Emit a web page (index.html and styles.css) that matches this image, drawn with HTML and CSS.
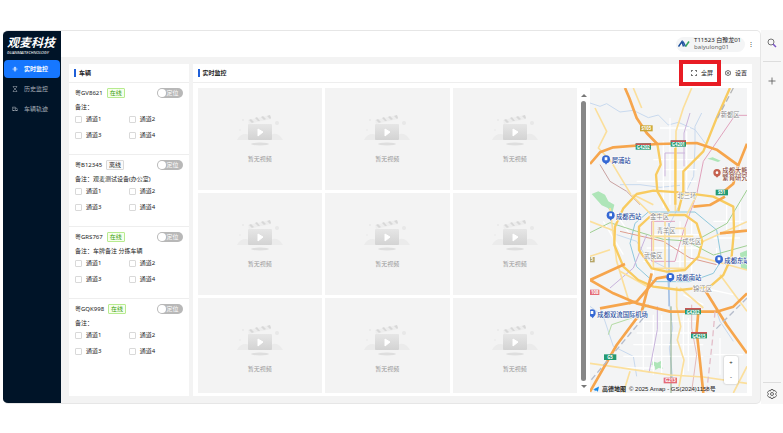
FILE: index.html
```html
<!DOCTYPE html>
<html lang="zh-CN">
<head>
    <meta charset="UTF-8">
    <meta name="viewport" content="width=device-width, initial-scale=1.0">
    <title>实时监控</title>
    <link rel="stylesheet" href="styles.css">
</head>
<body>
    <div class="window">
        <div class="app">
            <aside class="sidebar">
                <div class="logo">观麦科技<small>GUANMAITECHNOLOGY</small></div>
                <nav class="menu">
                    <a href="#" class="menu-item active">
                        <svg class="icon" viewBox="0 0 16 16"><path d="M8 1l4 4H4zM8 15l4-4H4zM1 8l3-3v6zM15 8l-3-3v6z" fill="currentColor" opacity=".8"/><circle cx="8" cy="8" r="2.5" fill="currentColor"/></svg>
                        实时监控
                    </a>
                    <a href="#" class="menu-item">
                        <svg class="icon" viewBox="0 0 16 16"><path d="M2 1h12M2 15h12M4 1v3l4 4 4-4V1M4 15v-3l4-4 4 4v3" fill="none" stroke="currentColor" stroke-width="1.5"/></svg>
                        历史监控
                    </a>
                    <a href="#" class="menu-item">
                        <svg class="icon" viewBox="0 0 16 16"><path d="M1 3h8v9H1zM9 6h4l2 3v3H9M3 6h4" fill="none" stroke="currentColor" stroke-width="1.5"/><circle cx="4" cy="12" r="1.5" fill="currentColor"/><circle cx="12" cy="12" r="1.5" fill="currentColor"/></svg>
                        车辆轨迹
                    </a>
                </nav>
            </aside>

            <div class="main">
                <header class="topbar">
                    <div class="user">
                        <svg class="avatar" viewBox="0 0 24 16"><path d="M1 13L8 3l3 10" fill="none" stroke="#1c4f9c" stroke-width="3"/><path d="M10 3l5 10" fill="none" stroke="#2456a5" stroke-width="3"/><path d="M15 13l7-10" fill="none" stroke="#35a45c" stroke-width="3"/></svg>
                        <div class="user-text">
                            <span>T11523 白豫龙01</span>
                            <span class="account">baiyulong01</span>
                        </div>
                    </div>
                    <button class="more" aria-label="更多">⋮</button>
                </header>

                <div class="content">
                    <section class="panel vehicles">
                        <div class="panel-head"><h2>车辆</h2></div>
                        <div class="vehicle">
                            <div class="vehicle-top">
                                <span>粤GV8621</span><span class="tag online">在线</span>
                                <label class="switch"><input type="checkbox"><span>定位</span></label>
                            </div>
                            <p>备注：</p>
                            <div class="channels">
                                <label><input type="checkbox">通道1</label>
                                <label><input type="checkbox">通道2</label>
                                <label><input type="checkbox">通道3</label>
                                <label><input type="checkbox">通道4</label>
                            </div>
                        </div>
                        <div class="vehicle">
                            <div class="vehicle-top">
                                <span>粤B12345</span><span class="tag">离线</span>
                                <label class="switch"><input type="checkbox"><span>定位</span></label>
                            </div>
                            <p>备注：观麦测试设备(办公室)</p>
                            <div class="channels">
                                <label><input type="checkbox">通道1</label>
                                <label><input type="checkbox">通道2</label>
                                <label><input type="checkbox">通道3</label>
                                <label><input type="checkbox">通道4</label>
                            </div>
                        </div>
                        <div class="vehicle">
                            <div class="vehicle-top">
                                <span>粤GRS767</span><span class="tag online">在线</span>
                                <label class="switch"><input type="checkbox"><span>定位</span></label>
                            </div>
                            <p>备注：车牌备注 分拣车辆</p>
                            <div class="channels">
                                <label><input type="checkbox">通道1</label>
                                <label><input type="checkbox">通道2</label>
                                <label><input type="checkbox">通道3</label>
                                <label><input type="checkbox">通道4</label>
                            </div>
                        </div>
                        <div class="vehicle">
                            <div class="vehicle-top">
                                <span>粤GQK998</span><span class="tag online">在线</span>
                                <label class="switch"><input type="checkbox"><span>定位</span></label>
                            </div>
                            <p>备注：</p>
                            <div class="channels">
                                <label><input type="checkbox">通道1</label>
                                <label><input type="checkbox">通道2</label>
                                <label><input type="checkbox">通道3</label>
                                <label><input type="checkbox">通道4</label>
                            </div>
                        </div>
                    </section>

                    <section class="panel monitor">
                        <div class="panel-head">
                            <h2>实时监控</h2>
                            <div class="actions">
                                <button class="action highlight">
                                    <svg class="icon" viewBox="0 0 16 16"><path d="M1 5V1h4M11 1h4v4M15 11v4h-4M5 15H1v-4" fill="none" stroke="currentColor" stroke-width="2"/></svg>
                                    全屏
                                </button>
                                <button class="action">
                                    <svg class="icon" viewBox="0 0 16 16"><path d="M6 1h4l1 2.500 3 0 1 4.500-1 4.500-3 0-1 2.500H6l-1-2.500-3 0L1 8l1-4.500 3 0z" fill="none" stroke="currentColor" stroke-width="1.500"/><circle cx="8" cy="8" r="2.500" fill="none" stroke="currentColor" stroke-width="1.500"/></svg>
                                    设置
                                </button>
                            </div>
                        </div>
                        <div class="monitor-body">
                            <div class="videos" id="videos"></div>
                            <div class="scrollbar"><i class="up"></i><i class="thumb"></i><i class="down"></i></div>
                            <div class="map">
                                <svg class="map-canvas" viewBox="60 0 471 915" preserveAspectRatio="xMidYMid slice">
                                    <rect x="0" y="-50" width="600" height="1000" fill="#f3f4f5"/>
                                    <!-- parks -->
                                    <g fill="#aee5b8">
                                        <path d="M65 318l20-8 20 10 10 20 18 10-6 25-14-15-18-8z"/>
                                        <path d="M510 495l21-8v60l-18-6z"/>
                                        <path d="M248 820l14 4 12-6-2 14 8 10-14-2-10 6-2-12-10-4z"/>
                                        <path d="M412 212l16-4 24 10-8 4-18-6z"/>
                                    </g>
                                    <!-- rivers -->
                                    <g class="river">
                                        <path d="M60 45l30 10 20-8 40 25 40-5 45 22 30-8 30 30 30-8 50 22 30 40"/>
                                        <path d="M395 75l-20 40 0 60-4 90-30 60-40 80"/>
                                        <path d="M140 440l60 20 30 50 60 30 10 120 8 60-10 60 10 90"/>
                                        <path d="M150 290l60 0 60 8 60-6"/>
                                        <path d="M60 655l40 30 30 90 60 30 10 60M430 640l20 60 40 60"/>
                                    </g>
                                    <!-- streets -->
                                    <g class="street">
                                        <path d="M270 120h90M250 215h140M280 245h100M200 280h180M300 90v260M350 130v200M280 160v200M230 440h160M230 480h160M220 520h160M250 400v160M330 400v160M365 400v160M430 400h90M430 450h80M440 480v60M470 350v90M510 340v90"/>
                                        <path d="M180 700h200M200 735h180M190 770h210M160 805h240M150 840h100M220 680v170M250 680v180M275 680v180M340 680v180M355 690v160M430 800h90M450 750v110M100 400l60 100M140 380l40 60M400 600l90 20M340 620l60 30"/>
                                    </g>
                                    <!-- metro lines -->
                                    <g class="metro">
                                        <path d="M531 82h-36l-55 80-40 58-20 100-40 110-25 90h-70v-120h70" stroke="#e0a3bd"/>
                                        <path d="M345 195h-60v70M360 75l-18 60v100" stroke="#ccb4dc"/>
                                        <path d="M90 230l30 50 50 30 40 40" stroke="#c9a2a2"/>
                                        <path d="M235 372h140l65 54 15 90-25 40-70 25H250l-50-45-20-70 15-60z" stroke="#8fc8dc"/>
                                        <path d="M60 434l60-30 80 26 80 24 70 5 80 42 101-28M531 306l-60 100-90 50" stroke="#9fcf93"/>
                                        <path d="M150 430l130 30 80 50 80 20" stroke="#dd9d8f"/>
                                        <path d="M297 405v250" stroke="#7fa8dc"/>
                                        <path d="M303 655v260" stroke="#88aa88"/>
                                        <path d="M262 655v70l-25 130M120 600l70-60 40-100" stroke="#c8b3dc"/>
                                        <path d="M365 650v70l15 80-15 110" stroke="#e5bbbb"/>
                                        <path d="M115 740l10-30 60-20 50-40" stroke="#b4dba4"/>
                                    </g>
                                    <!-- main roads -->
                                    <g class="road">
                                        <path d="M75 60l35 70-25 50 38 40 60 100"/>
                                        <path d="M190 0l25 60"/>
                                        <path d="M365 0l-25 60-22 70-2 240"/>
                                        <path d="M60 400l75 30M190 320l60 30M120 360l20 160 40 130M60 505l60-20"/>
                                        <path d="M397 461l134-60M385 506l146 40M245 381l-60-60M350 381l30-60"/>
                                        <path d="M250 381v160h95v-120h-60v90M240 445h130M285 400v140"/>
                                        <path d="M450 560l81 110M330 600l70 60M150 550l90 50"/>
                                        <path d="M60 826l70 10 100 15 70 10 100 6 131 19M180 850l-20 65M490 915l41-80"/>
                                        <path d="M320 596v60l12 60-10 40 20 60-15 80"/>
                                    </g>
                                    <g class="ring">
                                        <path d="M262 168l10 62-14 30 4 50 35 60"/>
                                        <path d="M480 0l-40 90-40 100-60 60v60l-15 60"/>
                                        <path d="M316 180v170"/>
                                        <path d="M250 308l-50 10-40 43-25 55-2 55 27 65 45 40 45 20 80 10 90-10 40-35 25-55 7-80-2-70-60-30-90-12z"/>
                                        <path d="M245 381l-38 35v70l38 55 45 10 55-5 40-40 12-45-17-55-35-25z"/>
                                    </g>
                                    <!-- expressways -->
                                    <g class="express">
                                        <path d="M165 0l13 30 22 60 30 45 32 33"/>
                                        <path d="M60 228l30-35 40-15 132-10 118-3 60 20 65 47 26-65M505 232l-15 55-30 25"/>
                                        <path d="M370 356l50-5 45-25M450 436l81-8"/>
                                        <path d="M60 576l70 40 70 30 100 25 140 0 50-15 41-40"/>
                                        <path d="M245 556l-30 115-75 100-80 140"/>
                                        <path d="M90 661l110-20 60-70 30-5M60 576l105-48"/>
                                        <path d="M385 671l-5 60 10 90 10 94"/>
                                        <path d="M405 606l65 105 61 85"/>
                                    </g>
                                    <!-- railways -->
                                    <g class="rail">
                                        <path d="M220 690l-160 190M531 630l-95 95" stroke="#b5bccb"/>
                                        <path d="M435 671l-8 90-17 150" stroke="#e3bfca"/>
                                        <path d="M490 0l-50 95" stroke="#b5b5b5"/>
                                    </g>
                                    <!-- road shields -->
                                    <g class="shield">
                                        <rect x="210" y="112" width="38" height="18" fill="#c9a638"/><text x="229" y="127">S105</text>
                                        <rect x="197" y="166" width="46" height="19" fill="#249a72"/><rect x="197" y="166" width="46" height="5" fill="#c55"/><text x="220" y="184">G4202</text>
                                        <rect x="302" y="157" width="46" height="19" fill="#249a72"/><rect x="302" y="157" width="46" height="5" fill="#c55"/><text x="325" y="175">G4201</text>
                                        <rect x="437" y="305" width="37" height="17" fill="#249a72"/><text x="455" y="319">S51</text>
                                        <rect x="60" y="507" width="14" height="16" fill="#b3a468"/><text x="66" y="520">5</text>
                                        <rect x="60" y="605" width="28" height="16" fill="#e46b76"/><text x="74" y="618">108</text>
                                        <rect x="345" y="660" width="48" height="19" fill="#249a72"/><rect x="345" y="660" width="48" height="5" fill="#c55"/><text x="369" y="678">G4202</text>
                                        <rect x="363" y="732" width="48" height="19" fill="#249a72"/><rect x="363" y="732" width="48" height="5" fill="#c55"/><text x="387" y="750">G4215</text>
                                        <rect x="102" y="799" width="37" height="17" fill="#249a72"/><text x="120" y="813">G5</text>
                                        <rect x="281" y="869" width="40" height="17" fill="#e46b76"/><text x="301" y="883">G213</text>
                                    </g>
                                    <g class="district">
                                        <text x="452" y="88">新都区</text>
                                        <text x="322" y="329">北三环</text>
                                        <text x="240" y="393">金牛区</text>
                                        <text x="260" y="434">青羊区</text>
                                        <text x="337" y="468">成华区</text>
                                        <text x="221" y="510">武侯区</text>
                                        <text x="369" y="610">锦江区</text>
                                    </g>
                                    <g class="place">
                                        <text x="125" y="226">犀浦站</text>
                                        <text x="138" y="392">成都西站</text>
                                        <text x="463" y="524">成都东站</text>
                                        <text x="318" y="577">成都南站</text>
                                        <text x="82" y="686">成都双流国际机场</text>
                                        <text x="457" y="254" class="spot">成都大熊猫</text>
                                        <text x="457" y="277" class="spot">繁育研究</text>
                                    </g>
                                    <g class="pin">
                                        <path d="M103 223h10l-5 7z"/><circle cx="108" cy="214" r="12"/>
                                        <path d="M117 391h10l-5 7z"/><circle cx="122" cy="382" r="12"/>
                                        <path d="M442 523h10l-5 7z"/><circle cx="447" cy="514" r="12"/>
                                        <path d="M296 576h10l-5 7z"/><circle cx="301" cy="567" r="12"/>
                                        <path d="M63 684h10l-5 7z"/><circle cx="66" cy="675" r="11"/>
                                    </g>
                                    <path d="M435 262h12l-6 7z" fill="#c5614f"/><circle cx="441" cy="254" r="11" fill="#c5614f"/>
                                    <g fill="#fff">
                                        <path d="M104 208h8v9h-8zM118 376h8v9h-8zM443 508h8v9h-8zM297 561h8v9h-8zM62 669h8v9h-8z"/>
                                        <circle cx="441" cy="254" r="4"/>
                                    </g>
                                </svg>
                                <div class="zoom">
                                    <button aria-label="放大">+</button>
                                    <button aria-label="缩小">-</button>
                                </div>
                                <div class="copyright">
                                    <svg class="icon" viewBox="0 0 16 16"><path d="M0 9L16 1l-3 14-5-4-3 3-1-4z" fill="#1689e8"/></svg>
                                    <b>高德地图</b>
                                    <span>© 2025 Amap - GS(2024)1158号</span>
                                </div>
                            </div>
                        </div>
                    </section>
                </div>
            </div>
        </div>

        <aside class="rail-bar">
            <button aria-label="搜索"><svg viewBox="0 0 20 20"><circle cx="8" cy="8" r="6" fill="none" stroke="#555" stroke-width="1.600"/><path d="M12 12l6 6" stroke="#7b55c7" stroke-width="3"/></svg></button>
            <button class="add" aria-label="添加"><svg viewBox="0 0 20 20"><path d="M10 3v14M3 10h14" stroke="#555" stroke-width="1.600"/></svg></button>
            <button class="gear" aria-label="设置"><svg viewBox="0 0 20 20"><path d="M8 1h4l1 3 3-1 3 4-2 3 2 3-3 4-3-1-1 3H8l-1-3-3 1-3-4 2-3-2-3 3-4 3 1z" fill="none" stroke="#444" stroke-width="1.600" stroke-linejoin="round"/><circle cx="10" cy="10" r="3" fill="none" stroke="#444" stroke-width="1.600"/></svg></button>
        </aside>
    </div>

    <script>
        const videos = document.getElementById('videos');
        for (let i = 0; i < 9; i++) {
            const cell = document.createElement('div');
            cell.classList.add('video');
            cell.innerHTML = `
                <svg viewBox="0 0 46 32">
                    <defs><linearGradient id="g${i}" x2="0" y2="1"><stop stop-color="#e6e6e6"/><stop offset="1" stop-color="#d3d3d3"/></linearGradient></defs>
                    <path d="M0 26c3-6 8-7 12-5h22c5-3 9 0 12 5z" fill="#ebebeb"/>
                    <ellipse cx="23" cy="30" rx="9" ry="1.500" fill="#dedede"/>
                    <path d="M11 6l22-5 1 4-22 5z" fill="#ededed"/>
                    <path d="M12 6l3 3 2-1-3-3zM18 4l3 3 2 0-3-4zM24 3l3 3 2-1-3-3zM30 2l3 3 1-1-1-3z" fill="#d8d8d8"/>
                    <rect x="11" y="10" width="24" height="16" rx="1" fill="url(#g${i})"/>
                    <path d="M21 15l5 3-5 4z" fill="#fff" stroke="#fff" stroke-linejoin="round"/>
                    <circle cx="40" cy="9" r="2" fill="#e8e8e8"/><circle cx="6" cy="6" r="1" fill="#e8e8e8"/><circle cx="3" cy="16" r="1" fill="#ececec"/>
                </svg>
                <span>暂无视频</span>
            `;
            videos.appendChild(cell);
        }
    </script>
</body>
</html>
```
FILE: styles.css
```css
* {
    box-sizing: border-box;
}

body {
    font-family: "Noto Sans", "Noto Sans CJK SC", sans-serif;
    font-size: 6px;
    line-height: 8px;
    margin: 0;
    color: #222;
    background-color: #fff;
}

button {
    font: inherit;
    color: inherit;
    background: none;
    border: 0;
    padding: 0;
}

h2, p {
    margin: 0;
    font-size: 6px;
}

.window {
    display: flex;
    height: 100vh;
    padding: 30px 0 29px 3px;
}

.app {
    flex: 1;
    display: flex;
    min-width: 0;
    overflow: hidden;
    border: 1px solid #e6e6e6;
    border-left: 0;
    border-radius: 5px;
    background-color: #f3f3f3;
}

.sidebar {
    flex: 0 0 58px;
    background-color: #001428;
    color: #a5adb6;
}

.logo {
    padding: 4px 0 0 4px;
    font-size: 12px;
    font-weight: bold;
    font-style: italic;
    line-height: 16px;
    color: #fff;
    white-space: nowrap;
}

.logo small {
    display: block;
    font-size: 4px;
    font-weight: normal;
    line-height: 4px;
}

.menu {
    display: flex;
    flex-direction: column;
    gap: 2px;
    padding: 5px 1px;
}

.menu-item {
    display: flex;
    align-items: center;
    gap: 6px;
    height: 18px;
    padding-left: 8px;
    border-radius: 4px;
    color: inherit;
    text-decoration: none;
}

.menu-item.active {
    background-color: #1677ff;
    color: #fff;
    font-weight: bold;
}

.icon {
    width: 6px;
    height: 6px;
    flex: none;
}

.main {
    flex: 1;
    display: flex;
    flex-direction: column;
    min-width: 0;
}

.topbar {
    display: flex;
    align-items: center;
    justify-content: flex-end;
    gap: 3px;
    height: 26px;
    padding-right: 6px;
    background-color: #fff;
}

.user {
    display: flex;
    align-items: center;
    gap: 4px;
    height: 15px;
    padding: 0 4px 0 2px;
    border-radius: 8px;
    background-color: #f4f5f6;
}

.avatar {
    width: 12px;
    height: 8px;
}

.user-text {
    line-height: 7px;
}

.user-text span {
    display: block;
}

.user-text .account {
    color: #666;
}

.content {
    flex: 1;
    display: flex;
    gap: 4px;
    min-height: 0;
    padding: 7px 8px;
}

.panel {
    display: flex;
    flex-direction: column;
    background-color: #fff;
}

.vehicles {
    flex: 0 0 17.5%;
}

.monitor {
    flex: 1;
    min-width: 0;
}

.panel-head {
    display: flex;
    align-items: center;
    justify-content: space-between;
    flex: 0 0 19px;
    padding: 0 5px;
    border-bottom: 1px solid #eee;
}

.panel-head h2 {
    padding-left: 3px;
    border-left: 2px solid #1f5fd8;
    line-height: 8px;
}

.actions {
    display: flex;
    gap: 12px;
}

.action {
    display: flex;
    align-items: center;
    gap: 4px;
}

.highlight {
    position: relative;
}

/* red frame marking the fullscreen button */
.highlight::after {
    content: "";
    position: absolute;
    inset: -9px -8px -9px -12px;
    border: 4px solid #e81c24;
    z-index: 2;
}

.vehicle {
    height: 72px;
    flex: none;
    padding: 5px 6px 0 6px;
    border-bottom: 1px solid #eee;
}

.vehicle:last-child {
    border-bottom: 0;
}

.vehicle-top {
    display: flex;
    align-items: center;
    gap: 4px;
    height: 10px;
}

.tag {
    padding: 0 2px;
    border: 1px solid #d9d9d9;
    border-radius: 1px;
    background-color: #fafafa;
}

.tag.online {
    border-color: #b7eb8f;
    background-color: #f6ffed;
    color: #389e0d;
}

.switch {
    display: flex;
    align-items: center;
    justify-content: flex-end;
    width: 26px;
    height: 10px;
    margin-left: auto;
    padding: 0 4px 0 1px;
    border-radius: 5px;
    background-color: #b8b8b8;
    color: #fff;
}

.switch input {
    appearance: none;
    width: 8px;
    height: 8px;
    margin: 0 auto 0 0;
    border-radius: 50%;
    background-color: #fff;
}

.vehicle p {
    padding: 5px 0 4px;
    white-space: nowrap;
}

.channels {
    display: grid;
    grid-template-columns: 1fr 1fr;
    row-gap: 8px;
}

.channels label {
    display: flex;
    align-items: center;
    gap: 4px;
}

.channels input {
    appearance: none;
    width: 7px;
    height: 7px;
    margin: 0;
    border: 1px solid #d9d9d9;
    border-radius: 1px;
}

.monitor-body {
    flex: 1;
    display: flex;
    min-height: 0;
    padding: 5px 5px 3px;
}

.videos {
    flex: 1;
    display: grid;
    grid-template-columns: repeat(3, 1fr);
    grid-auto-rows: 102px;
    gap: 3px;
    overflow: hidden;
}

.video {
    display: flex;
    flex-direction: column;
    align-items: center;
    padding-top: 26px;
    background-color: #f3f3f3;
    color: #999;
}

.video svg {
    width: 46px;
    height: 32px;
    margin-bottom: 9px;
}

.scrollbar {
    display: flex;
    flex-direction: column;
    align-items: center;
    gap: 4px;
    width: 13px;
    padding: 6px 0 5px;
}

.scrollbar .thumb {
    flex: 1;
    width: 5px;
    border-radius: 3px;
    background-color: #888;
}

.up, .down {
    border: 3px solid transparent;
}

.up {
    border-top: 0;
    border-bottom-color: #777;
}

.down {
    border-bottom: 0;
    border-top-color: #777;
}

.map {
    position: relative;
    flex: 0 0 157px;
    overflow: hidden;
}

.map-canvas {
    display: block;
    width: 100%;
    height: 100%;
}

.river path, .street path, .metro path, .road path, .ring path, .express path, .rail path {
    fill: none;
    stroke-linejoin: round;
}

.river path {
    stroke: #c8d9ee;
    stroke-width: 3px;
}

.street path {
    stroke: #fff;
    stroke-width: 4px;
}

.metro path {
    stroke-width: 3px;
}

.road path {
    stroke: #fbdf9c;
    stroke-width: 5px;
}

.ring path {
    stroke: #f8cb60;
    stroke-width: 7px;
}

.express path {
    stroke: #f6a54c;
    stroke-width: 8px;
}

.rail path {
    stroke-width: 4px;
    stroke-dasharray: 18 10;
}

.shield text {
    font-size: 13px;
    font-weight: bold;
    fill: #fff;
    text-anchor: middle;
}

.district text {
    font-size: 19px;
    fill: #888;
    stroke: #fff;
    stroke-width: 3px;
    paint-order: stroke;
}

.place text {
    font-size: 19px;
    font-weight: 500;
    fill: #2c4fa0;
    stroke: #fff;
    stroke-width: 3px;
    paint-order: stroke;
}

.place .spot {
    fill: #8a4a3c;
}

.pin {
    fill: #3568d4;
}

.zoom {
    position: absolute;
    right: 9px;
    bottom: 9px;
    display: flex;
    flex-direction: column;
    width: 14px;
    border-radius: 2px;
    background-color: #fff;
    box-shadow: 0 0 2px rgba(0, 0, 0, 0.3);
}

.zoom button {
    height: 14px;
}

.copyright {
    position: absolute;
    left: 3px;
    bottom: 0;
    display: flex;
    align-items: center;
    gap: 3px;
    white-space: nowrap;
}

.copyright span {
    font-family: "Liberation Sans", "Noto Sans CJK SC", sans-serif;
}

.rail-bar {
    flex: 0 0 22px;
    display: flex;
    flex-direction: column;
    align-items: center;
    padding: 8px 0 5px;
    background-color: #f7f7f7;
}

.rail-bar svg {
    display: block;
    width: 10px;
    height: 10px;
}

.rail-bar .add {
    margin-top: 13px;
    padding: 14px 4px 0;
    border-top: 1px solid #ddd;
}

.rail-bar .gear {
    margin-top: auto;
    padding: 6px 4px 0;
    border-top: 1px solid #ddd;
}
```
